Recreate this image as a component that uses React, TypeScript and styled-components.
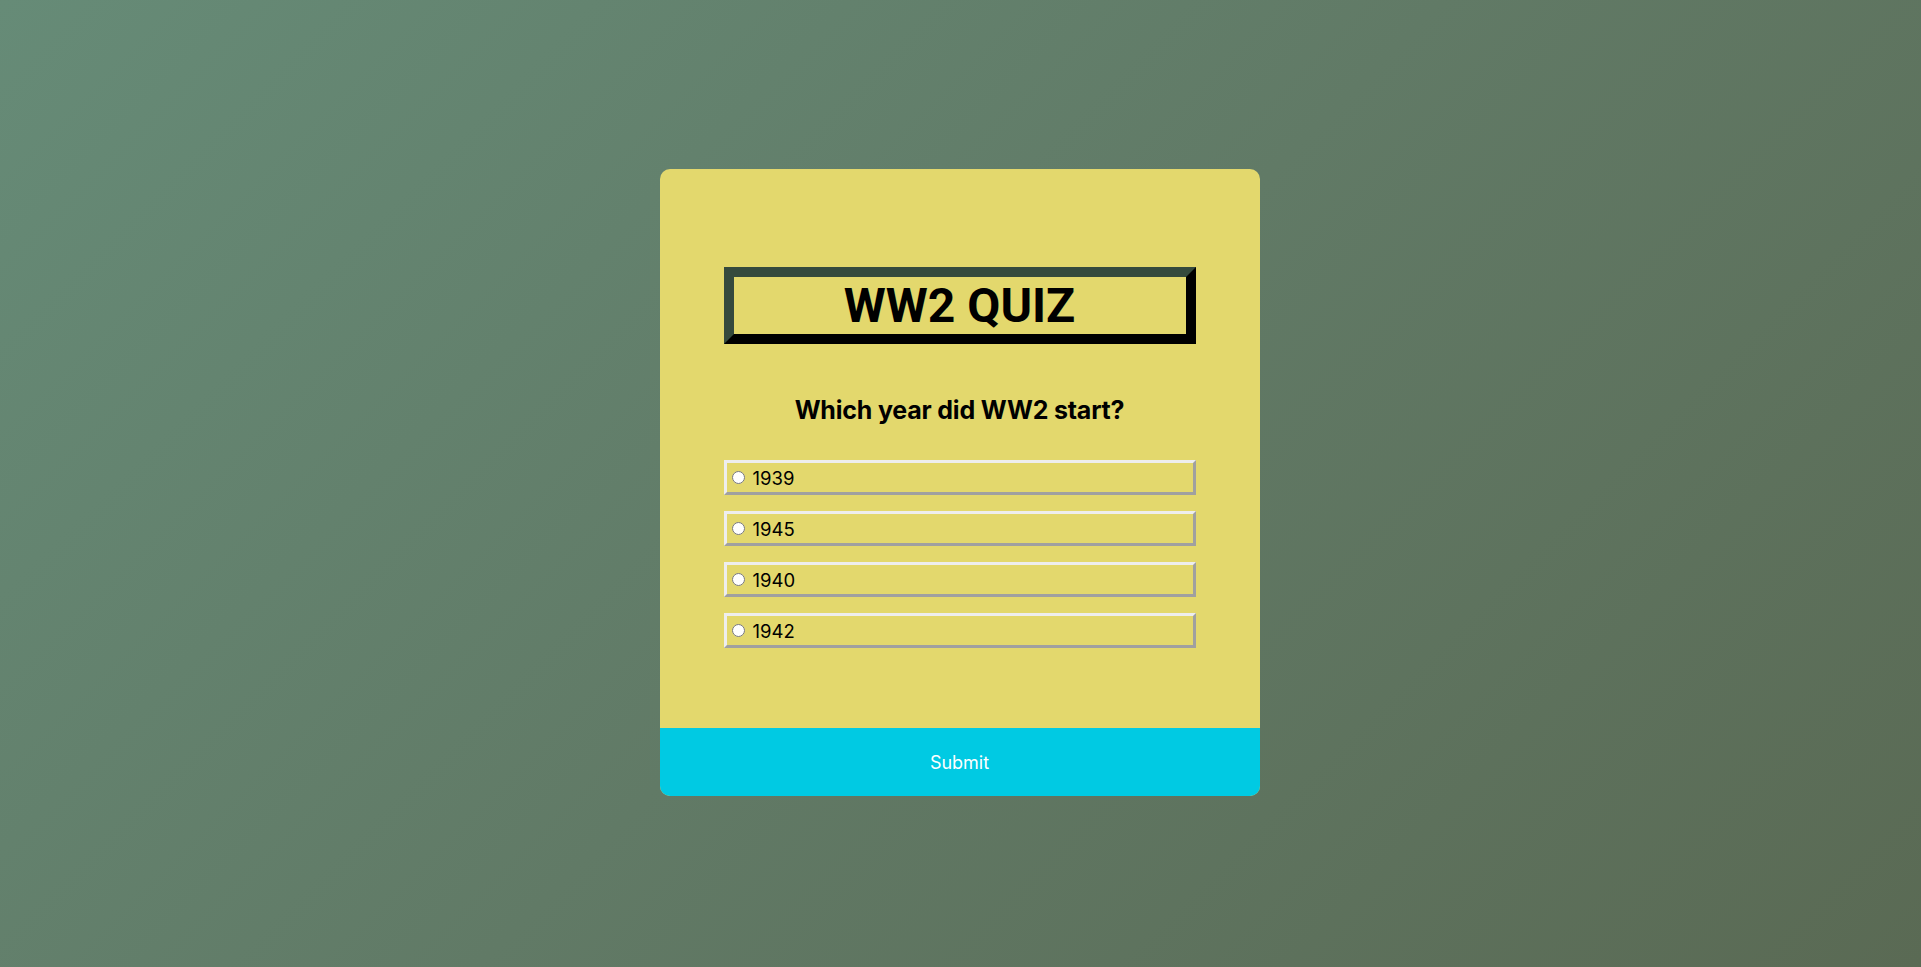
import React from "react";
import styled, { createGlobalStyle } from "styled-components";

const GlobalStyle = createGlobalStyle`
  html, body {
    margin: 0;
    padding: 0;
  }
  body {
    font-family: Inter, "Noto Sans", sans-serif;
    background: linear-gradient(135deg, #668b77 0%, #617a66 50%, #5a6a54 100%);
    min-height: 100vh;
  }
`;

const Page = styled.main`
  min-height: 967px;
  box-sizing: border-box;
  padding: 0 2px 2px 0;
  display: flex;
  align-items: center;
  justify-content: center;
`;

const Card = styled.div`
  width: 600px;
  background: #e3d86d;
  border-radius: 10px;
  overflow: hidden;
  display: flex;
  flex-direction: column;
`;

const Body = styled.div`
  padding: 98px 64px 80px;
  display: flex;
  flex-direction: column;
`;

const Title = styled.h1`
  margin: 0;
  height: 57px;
  border-width: 10px;
  border-style: solid;
  border-color: #354a3d #000 #000 #354a3d;
  font-family: Roboto, "Liberation Sans", sans-serif;
  font-weight: 700;
  font-size: 48px;
  line-height: 57px;
  text-align: center;
  color: #000;
`;

const Question = styled.h2`
  margin: 48px 0 32px;
  font-family: Inter, "Noto Sans", sans-serif;
  font-weight: 700;
  font-size: 25px;
  line-height: 36px;
  text-align: center;
  color: #000;
  letter-spacing: -0.2px;
`;

const Options = styled.ul`
  list-style: none;
  margin: 0;
  padding: 0;
  display: flex;
  flex-direction: column;
  gap: 16px;
`;

const Option = styled.li`
  height: 29px;
  border-width: 3px;
  border-style: solid;
  border-color: #eeeeee #a0a0a0 #a0a0a0 #eeeeee;
`;

const OptionLabel = styled.label`
  display: flex;
  align-items: center;
  height: 100%;
  font-family: Inter, "Noto Sans", sans-serif;
  font-size: 18.5px;
  color: #000;
  cursor: pointer;
`;

const Radio = styled.input`
  width: 13px;
  height: 13px;
  margin: 0 8px 0 5px;
`;

const Submit = styled.button`
  height: 68px;
  border: none;
  background: #00cae3;
  color: #fff;
  font-family: Inter, "Noto Sans", sans-serif;
  font-size: 18px;
  cursor: pointer;
`;

const answers = ["1939", "1945", "1940", "1942"];

export default function App() {
  return (
    <>
      <GlobalStyle />
      <Page>
        <Card>
          <Body>
            <Title>WW2 QUIZ</Title>
            <Question>Which year did WW2 start?</Question>
            <Options>
              {answers.map((a) => (
                <Option key={a}>
                  <OptionLabel>
                    <Radio type="radio" name="answer" value={a} />
                    {a}
                  </OptionLabel>
                </Option>
              ))}
            </Options>
          </Body>
          <Submit>Submit</Submit>
        </Card>
      </Page>
    </>
  );
}
